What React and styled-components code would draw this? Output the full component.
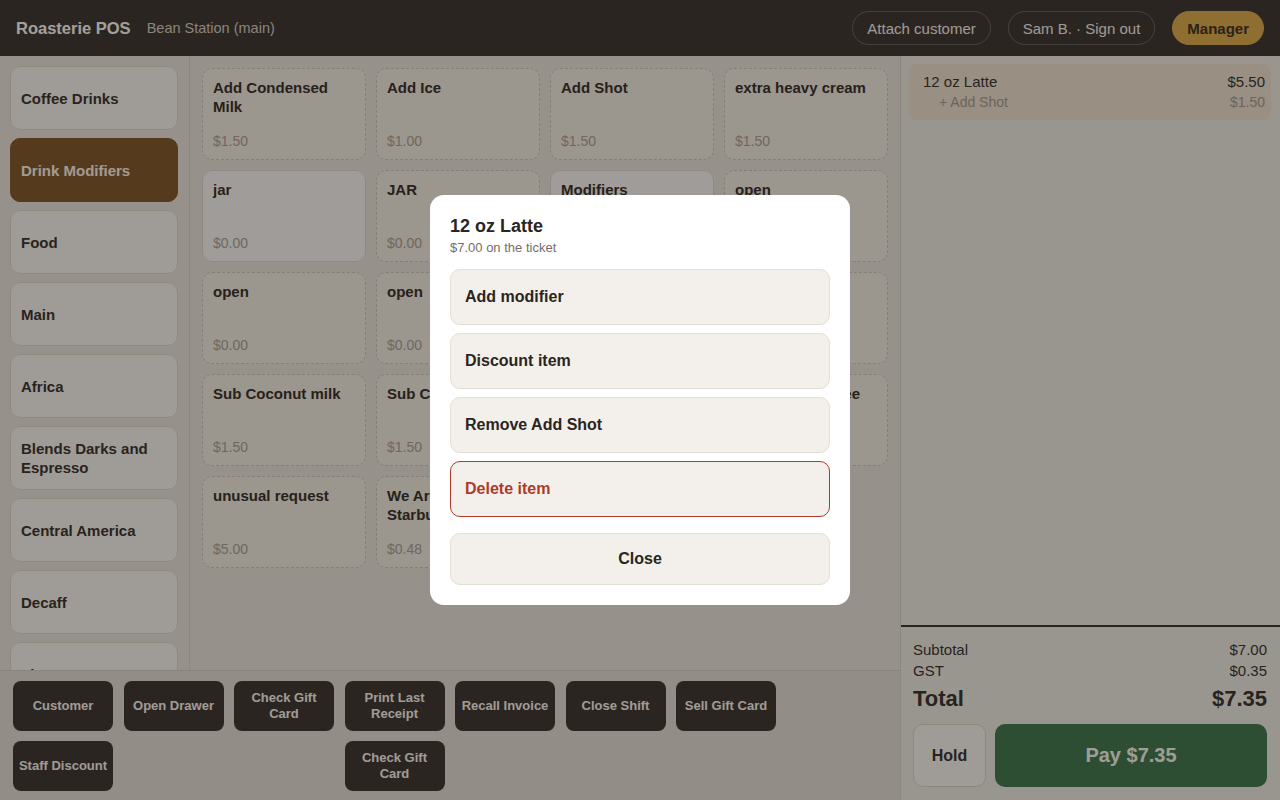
import React from "react";
import styled, { createGlobalStyle } from "styled-components";

const GlobalStyle = createGlobalStyle`
  html, body {
    margin: 0;
    padding: 0;
    height: 100%;
  }
  body {
    font-family: "Liberation Sans", Arial, sans-serif;
    color: #36302b;
  }
  * {
    box-sizing: border-box;
  }
`;

const Screen = styled.div`
  position: relative;
  width: 100%;
  height: 100vh;
  display: flex;
  flex-direction: column;
  overflow: hidden;
`;

const Header = styled.header`
  height: 56px;
  flex-shrink: 0;
  display: flex;
  align-items: center;
  padding: 0 16px;
  background: #38332f;
  gap: 16px;
`;

const Brand = styled.div`
  font-size: 16.5px;
  font-weight: 700;
  color: #fbf8f3;
`;

const Store = styled.div`
  font-size: 14.5px;
  color: #d1cbc2;
`;

const HeaderActions = styled.div`
  margin-left: auto;
  display: flex;
  align-items: center;
  gap: 17px;
`;

const Pill = styled.button`
  height: 34px;
  padding: 0 14px;
  border-radius: 17px;
  font-family: inherit;
  font-size: 15px;
  font-weight: ${(p) => (p.$accent ? 700 : 400)};
  color: ${(p) => (p.$accent ? "#382f22" : "#f3efe9")};
  background: ${(p) => (p.$accent ? "#d9a94a" : "transparent")};
  border: 1px solid ${(p) => (p.$accent ? "#d9a94a" : "rgba(255,255,255,0.22)")};
`;

const Body = styled.div`
  flex: 1;
  display: flex;
  min-height: 0;
`;

const Workspace = styled.div`
  width: 900px;
  display: flex;
  flex-direction: column;
  min-height: 0;
`;

const Browse = styled.div`
  flex: 1;
  display: flex;
  min-height: 0;
  background: #e6e2da;
`;

const Categories = styled.nav`
  width: 190px;
  flex-shrink: 0;
  padding: 10px 10px 0;
  border-right: 1px solid #d5d0c8;
  display: flex;
  flex-direction: column;
  gap: 8px;
  overflow: hidden;
`;

const Category = styled.button`
  flex-shrink: 0;
  height: 64px;
  width: 168px;
  padding: 0 10px;
  text-align: left;
  font-family: inherit;
  font-size: 15px;
  font-weight: 700;
  line-height: 19px;
  border-radius: 10px;
  color: ${(p) => (p.$active ? "#f8f0e2" : "#36302b")};
  background: ${(p) => (p.$active ? "#7d542a" : "#f4f2ee")};
  border: 1px solid ${(p) => (p.$active ? "#7d542a" : "#dcd3c8")};
`;

const ItemGrid = styled.div`
  flex: 1;
  padding: 12px;
  display: grid;
  grid-template-columns: repeat(4, 164px);
  grid-auto-rows: 92px;
  gap: 10px;
  align-content: start;
  overflow: hidden;
`;

const ItemCard = styled.button`
  display: flex;
  flex-direction: column;
  justify-content: space-between;
  padding: 9px 10px 10px;
  text-align: left;
  font-family: inherit;
  border-radius: 10px;
  background: ${(p) => (p.$plain ? "#f5f3f0" : "#ede8df")};
  border: 1px ${(p) => (p.$plain ? "solid #dad4cb" : "dashed #cbc2b6")};
`;

const ItemName = styled.span`
  font-size: 15px;
  font-weight: 700;
  line-height: 19px;
  color: #332d28;
`;

const ItemPrice = styled.span`
  font-size: 14px;
  color: #a69e94;
`;

const ActionBar = styled.div`
  height: 130px;
  flex-shrink: 0;
  padding: 10px 13px;
  background: #dfdad2;
  border-top: 1px solid #d2ccc3;
  display: grid;
  grid-template-columns: repeat(7, 100px);
  grid-template-rows: repeat(2, 50px);
  column-gap: 10.5px;
  row-gap: 10px;
`;

const ActionButton = styled.button`
  grid-column: ${(p) => p.$col || "auto"};
  grid-row: ${(p) => p.$row || "auto"};
  padding: 0 3px;
  border: none;
  border-radius: 8px;
  background: #38332f;
  color: #f5f1ea;
  font-family: inherit;
  font-size: 13px;
  font-weight: 700;
  line-height: 16px;
`;

const Ticket = styled.aside`
  flex: 1;
  display: flex;
  flex-direction: column;
  background: #ebe8e2;
  border-left: 1px solid #d5d0c8;
`;

const Lines = styled.div`
  flex: 1;
  padding: 8px 9px 8px 8px;
`;

const Line = styled.div`
  padding: 8px 6px 8px 14px;
  border-radius: 8px;
  background: #ebdecd;
`;

const LineRow = styled.div`
  display: flex;
  justify-content: space-between;
  font-size: ${(p) => (p.$sub ? "14px" : "15px")};
  line-height: 20px;
  color: ${(p) => (p.$sub ? "#a1988e" : "#36302b")};
  padding-left: ${(p) => (p.$sub ? "16px" : "0")};
`;

const Totals = styled.div`
  border-top: 2px solid #38332f;
  padding: 12px 13px 13px 12px;
`;

const TotalRow = styled.div`
  display: flex;
  justify-content: space-between;
  margin-top: ${(p) => (p.$grand ? "4px" : "0")};
  font-size: ${(p) => (p.$grand ? "22px" : "15px")};
  font-weight: ${(p) => (p.$grand ? 700 : 400)};
  line-height: ${(p) => (p.$grand ? "28px" : "21px")};
  color: #36302b;
`;

const PayRow = styled.div`
  display: flex;
  gap: 9px;
  margin-top: 11px;
  height: 63px;
`;

const HoldButton = styled.button`
  width: 73px;
  border-radius: 10px;
  border: 1px solid #d8d0c5;
  background: #f4f2ee;
  font-family: inherit;
  font-size: 16px;
  font-weight: 700;
  color: #36302b;
`;

const PayButton = styled.button`
  flex: 1;
  border: none;
  border-radius: 10px;
  background: #3e754c;
  color: #f2f4ee;
  font-family: inherit;
  font-size: 20px;
  font-weight: 700;
`;

const Backdrop = styled.div`
  position: absolute;
  inset: 0;
  background: rgba(22, 16, 10, 0.38);
  display: flex;
  align-items: center;
  justify-content: center;
`;

const Dialog = styled.div`
  width: 420px;
  padding: 20px;
  background: #ffffff;
  border-radius: 14px;
  display: flex;
  flex-direction: column;
`;

const DialogTitle = styled.div`
  font-size: 18px;
  font-weight: 700;
  line-height: 22px;
  color: #2b2520;
`;

const DialogNote = styled.div`
  margin-top: 3px;
  font-size: 13px;
  line-height: 16px;
  color: #776d64;
`;

const Options = styled.div`
  margin-top: 13px;
  display: flex;
  flex-direction: column;
  gap: 8px;
`;

const Option = styled.button`
  height: ${(p) => (p.$center ? "52px" : "56px")};
  margin-top: ${(p) => (p.$center ? "8px" : "0")};
  padding: 0 14px;
  text-align: ${(p) => (p.$center ? "center" : "left")};
  border-radius: 10px;
  background: #f3f0eb;
  border: 1px solid ${(p) => (p.$danger ? "#b03a2c" : "#e4ded4")};
  color: ${(p) => (p.$danger ? "#ad3a2b" : "#2b2520")};
  font-family: inherit;
  font-size: 16px;
  font-weight: 700;
`;

const categories = [
  "Coffee Drinks",
  "Drink Modifiers",
  "Food",
  "Main",
  "Africa",
  "Blends Darks and Espresso",
  "Central America",
  "Decaff",
  "Flavours",
  "Retail",
];

const items = [
  { name: "Add Condensed Milk", price: "$1.50" },
  { name: "Add Ice", price: "$1.00" },
  { name: "Add Shot", price: "$1.50" },
  { name: "extra heavy cream", price: "$1.50" },
  { name: "jar", price: "$0.00", plain: true },
  { name: "JAR", price: "$0.00" },
  { name: "Modifiers", price: "$0.00", plain: true },
  { name: "open", price: "$0.00" },
  { name: "open", price: "$0.00" },
  { name: "open", price: "$0.00" },
  { name: "Sub Almond milk", price: "$1.50" },
  { name: "Sub Oat milk", price: "$1.50" },
  { name: "Sub Coconut milk", price: "$1.50" },
  { name: "Sub Cashew milk", price: "$1.50" },
  { name: "Sub Soy milk", price: "$1.50" },
  { name: "Sub Lactose Free", price: "$1.00" },
  { name: "unusual request", price: "$5.00" },
  { name: "We Are Not Starbucks", price: "$0.48" },
];

const actions = [
  { label: "Customer" },
  { label: "Open Drawer" },
  { label: "Check Gift Card" },
  { label: "Print Last Receipt" },
  { label: "Recall Invoice" },
  { label: "Close Shift" },
  { label: "Sell Gift Card" },
  { label: "Staff Discount", col: 1, row: 2 },
  { label: "Check Gift Card", col: 4, row: 2 },
];

export default function App() {
  return (
    <Screen>
      <GlobalStyle />
      <Header>
        <Brand>Roasterie POS</Brand>
        <Store>Bean Station (main)</Store>
        <HeaderActions>
          <Pill>Attach customer</Pill>
          <Pill>Sam B. · Sign out</Pill>
          <Pill $accent>Manager</Pill>
        </HeaderActions>
      </Header>

      <Body>
        <Workspace>
          <Browse>
            <Categories>
              {categories.map((c) => (
                <Category key={c} $active={c === "Drink Modifiers"}>
                  {c}
                </Category>
              ))}
            </Categories>
            <ItemGrid>
              {items.map((it, i) => (
                <ItemCard key={i} $plain={it.plain}>
                  <ItemName>{it.name}</ItemName>
                  <ItemPrice>{it.price}</ItemPrice>
                </ItemCard>
              ))}
            </ItemGrid>
          </Browse>
          <ActionBar>
            {actions.map((a, i) => (
              <ActionButton key={i} $col={a.col} $row={a.row}>
                {a.label}
              </ActionButton>
            ))}
          </ActionBar>
        </Workspace>

        <Ticket>
          <Lines>
            <Line>
              <LineRow>
                <span>12 oz Latte</span>
                <span>$5.50</span>
              </LineRow>
              <LineRow $sub>
                <span>+ Add Shot</span>
                <span>$1.50</span>
              </LineRow>
            </Line>
          </Lines>
          <Totals>
            <TotalRow>
              <span>Subtotal</span>
              <span>$7.00</span>
            </TotalRow>
            <TotalRow>
              <span>GST</span>
              <span>$0.35</span>
            </TotalRow>
            <TotalRow $grand>
              <span>Total</span>
              <span>$7.35</span>
            </TotalRow>
            <PayRow>
              <HoldButton>Hold</HoldButton>
              <PayButton>Pay $7.35</PayButton>
            </PayRow>
          </Totals>
        </Ticket>
      </Body>

      <Backdrop>
        <Dialog>
          <DialogTitle>12 oz Latte</DialogTitle>
          <DialogNote>$7.00 on the ticket</DialogNote>
          <Options>
            <Option>Add modifier</Option>
            <Option>Discount item</Option>
            <Option>Remove Add Shot</Option>
            <Option $danger>Delete item</Option>
            <Option $center>Close</Option>
          </Options>
        </Dialog>
      </Backdrop>
    </Screen>
  );
}
